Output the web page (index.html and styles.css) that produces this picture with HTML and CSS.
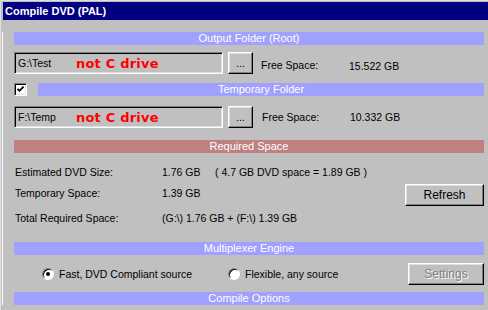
FILE: index.html
```html
<!DOCTYPE html>
<html lang="en">
<head>
    <meta charset="UTF-8">
    <meta name="viewport" content="width=device-width, initial-scale=1.0">
    <title>Compile DVD (PAL)</title>
    <link rel="stylesheet" href="styles.css">
</head>
<body>
    <div class="window">
        <div class="titlebar">Compile DVD (PAL)</div>
        <div class="panel">
            <div class="bar">Output Folder (Root)</div>
            <div class="folder-row root">
                <div class="field"><span class="path">G:\Test</span><span class="warn">not C drive</span></div>
                <button class="btn browse">...</button>
                <span class="free-label">Free Space:</span>
                <span class="free-value">15.522 GB</span>
            </div>
            <div class="check-row">
                <span class="checkbox">
                    <svg width="9" height="9" viewBox="0 0 9 9"><path d="M1.5 3.8 L3.5 5.8 L7.6 1.7" fill="none" stroke="#000" stroke-width="1.8"/></svg>
                </span>
                <div class="bar">Temporary Folder</div>
            </div>
            <div class="folder-row temp">
                <div class="field"><span class="path">F:\Temp</span><span class="warn">not C drive</span></div>
                <button class="btn browse">...</button>
                <span class="free-label">Free Space:</span>
                <span class="free-value">10.332 GB</span>
            </div>
            <div class="bar bar-red">Required Space</div>
            <div class="space-section">
                <div class="stats">
                    <div class="stat">
                        <span class="stat-label">Estimated DVD Size:</span>
                        <span class="stat-value">1.76 GB</span>
                        <span class="stat-note">( 4.7 GB DVD space = 1.89 GB )</span>
                    </div>
                    <div class="stat">
                        <span class="stat-label">Temporary Space:</span>
                        <span class="stat-value">1.39 GB</span>
                    </div>
                    <div class="stat">
                        <span class="stat-label">Total Required Space:</span>
                        <span class="stat-value">(G:\) 1.76 GB + (F:\) 1.39 GB</span>
                    </div>
                </div>
                <button class="btn refresh">Refresh</button>
            </div>
            <div class="bar">Multiplexer Engine</div>
            <div class="mux-row">
                <label class="radio-opt fast"><span class="radio checked"></span>Fast, DVD Compliant source</label>
                <label class="radio-opt"><span class="radio"></span>Flexible, any source</label>
                <button class="btn settings" disabled>Settings</button>
            </div>
            <div class="bar">Compile Options</div>
        </div>
    </div>
</body>
</html>
```

FILE: styles.css
```css
body{
    margin: 0;
    background: #c0c0c0;
    font-family: "Liberation Sans", Arial, sans-serif;
    font-size: 10.5px;
    color: #000;
}
.window{
    width: 487px;
    height: 309px;
    border-top: 1px solid #dfdfdf;
    border-left: 1px solid #dfdfdf;
    padding: 1px 0 0 2px;
    box-sizing: content-box;
    overflow: hidden;
}
.titlebar{
    height: 18px;
    line-height: 18px;
    background: #000080;
    color: #fff;
    font-size: 11px;
    font-weight: bold;
    padding-left: 2px;
}
.panel{
    padding: 0 6px 0 11px;
    border-left: 1px solid #fff;
    margin-left: -1px;
}
.bar{
    height: 13px;
    line-height: 13px;
    background: #a0a0ff;
    color: #fff;
    font-size: 11px;
    text-align: center;
    margin-top: 12px;
}
.bar-red{
    background: #c08080;
}

/* folder rows */
.folder-row{
    display: flex;
    align-items: center;
    height: 22px;
    margin-top: 7px;
}
.folder-row.temp{
    margin-top: 10px;
}
.field{
    width: 209px;
    height: 22px;
    box-sizing: border-box;
    border: 1px solid;
    border-color: #808080 #fff #fff #808080;
    box-shadow: inset 1px 1px #000, inset -1px -1px #dfdfdf;
    display: flex;
    align-items: center;
    padding-left: 3px;
}
.path{
    width: 58px;
}
.warn{
    color: #f00;
    font-family: "DejaVu Sans", sans-serif;
    font-weight: bold;
    font-size: 13px;
    letter-spacing: 0.2px;
}
.btn{
    font-family: "Liberation Sans", Arial, sans-serif;
    font-size: 11px;
    background: #c0c0c0;
    color: #000;
    border: 1px solid;
    border-color: #fff #000 #000 #fff;
    box-shadow: inset -1px -1px #808080, inset 1px 1px #dfdfdf;
    padding: 0;
    height: 22px;
    box-sizing: border-box;
}
.browse{
    width: 25px;
    margin-left: 5px;
}
.free-label{
    margin-left: 8px;
    width: 88px;
}
.root .free-label{
    padding-top: 4px;
}
.root .free-value{
    padding-top: 6px;
}
.temp .free-label{
    margin-left: 9px;
}

/* checkbox */
.check-row{
    display: flex;
    align-items: center;
    margin-top: 9px;
    height: 13px;
}
.check-row .bar{
    flex: 1;
    margin: 0 0 0 11px;
}
.checkbox{
    width: 13px;
    height: 13px;
    box-sizing: border-box;
    background: #fff;
    border: 1px solid;
    border-color: #808080 #fff #fff #808080;
    box-shadow: inset 1px 1px #000, inset -1px -1px #dfdfdf;
    display: flex;
    align-items: center;
    justify-content: center;
}

/* required space */
.space-section{
    display: flex;
}
.stats{
    flex: 1;
    padding-left: 1px;
}
.stat{
    display: flex;
    height: 14px;
    line-height: 14px;
    margin-top: 12px;
}
.stat:nth-child(2){
    margin-top: 7px;
}
.stat:nth-child(3){
    margin-top: 11px;
}
.stat-label{
    width: 147px;
}
.stat-value{
    min-width: 53px;
}
.refresh{
    width: 79px;
    margin-top: 31px;
    align-self: flex-start;
    font-size: 12px;
}

/* multiplexer */
.mux-row{
    display: flex;
    align-items: center;
    height: 22px;
    margin-top: 8px;
}
.mux-row + .bar{
    margin-top: 7px;
}
.space-section + .bar{
    margin-top: 17px;
}
.radio-opt{
    display: flex;
    align-items: center;
    gap: 5px;
}
.radio-opt.fast{
    margin-left: 28px;
    width: 186px;
}
.radio{
    width: 12px;
    height: 12px;
    box-sizing: border-box;
    border-radius: 50%;
    background: #fff;
    border: 1px solid;
    border-color: #808080 #fff #fff #808080;
    box-shadow: inset 1px 1px #000;
    display: flex;
    align-items: center;
    justify-content: center;
}
.radio.checked::after{
    content: "";
    width: 4px;
    height: 4px;
    border-radius: 50%;
    background: #000;
}
.settings{
    margin-left: auto;
    width: 76px;
    color: #808080;
    text-shadow: 1px 1px #fff;
    font-size: 12px;
}
```
